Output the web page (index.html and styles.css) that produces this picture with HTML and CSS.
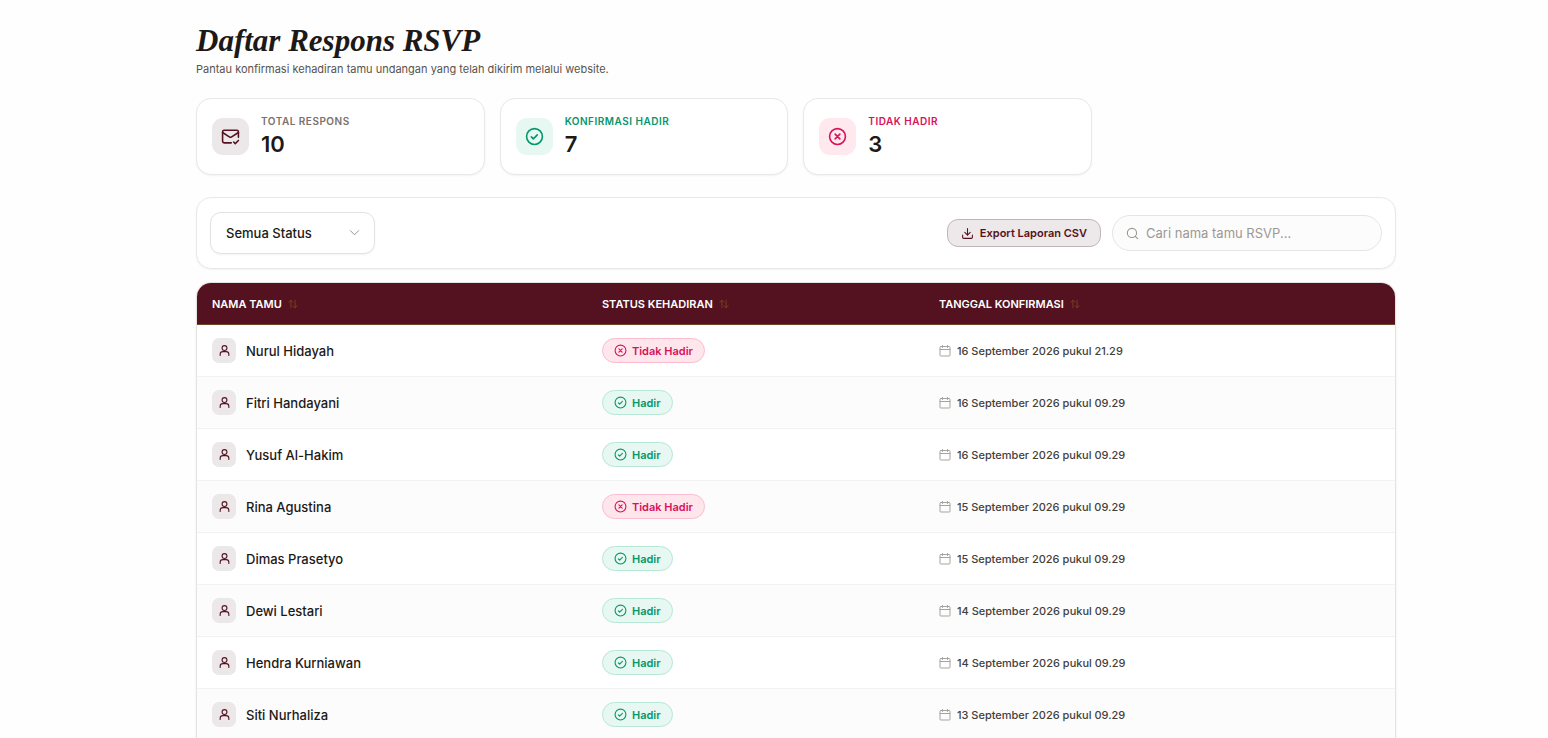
FILE: index.html
```html
<!DOCTYPE html>
<html lang="id">
<head>
<meta charset="utf-8">
<title>Daftar Respons RSVP</title>
<link rel="stylesheet" href="styles.css">
</head>
<body>
<svg class="sprite" aria-hidden="true">
  <symbol id="mail-check" viewBox="0 0 24 24"><path d="M22 13V6a2 2 0 0 0-2-2H4a2 2 0 0 0-2 2v12c0 1.100.9 2 2 2h9"/><path d="m22 7-8.970 5.700a1.940 1.940 0 0 1-2.060 0L2 7"/><path d="m16 19 2 2 4-4"/></symbol>
  <symbol id="check" viewBox="0 0 24 24"><circle cx="12" cy="12" r="10"/><path d="m8 12.500 2.500 2.500 5-5"/></symbol>
  <symbol id="cross" viewBox="0 0 24 24"><circle cx="12" cy="12" r="10"/><path d="m15 9-6 6M9 9l6 6"/></symbol>
  <symbol id="user" viewBox="0 0 24 24"><circle cx="12" cy="7.500" r="4.500"/><path d="M4 21v-2a5 5 0 0 1 5-5h6a5 5 0 0 1 5 5v2"/></symbol>
  <symbol id="calendar" viewBox="0 0 24 24"><rect x="2" y="3" width="20" height="19" rx="1.500"/><path d="M7 1v4M17 1v4M2 9h20"/></symbol>
  <symbol id="sort" viewBox="0 0 24 24"><path d="m2 8 5-5 5 5M7 3v18M12 16l5 5 5-5M17 21V3"/></symbol>
  <symbol id="download" viewBox="0 0 24 24"><path d="M21 15v4a2 2 0 0 1-2 2H5a2 2 0 0 1-2-2v-4M7 10l5 5 5-5M12 15V3"/></symbol>
  <symbol id="search" viewBox="0 0 24 24"><circle cx="11" cy="11" r="8.500"/><path d="m21.500 21.500-4.400-4.400"/></symbol>
  <symbol id="chevron" viewBox="0 0 24 24"><path d="m3 8 9 9 9-9"/></symbol>
</svg>
<main class="page">
  <header class="intro">
    <h1 class="title">Daftar Respons RSVP</h1>
    <p class="subtitle">Pantau konfirmasi kehadiran tamu undangan yang telah dikirim melalui website.</p>
  </header>
  <section class="stats">
    <div class="card stat"><span class="stat-icon"><svg class="icon"><use href="#mail-check"/></svg></span><div><p class="stat-label">TOTAL RESPONS</p><p class="stat-value">10</p></div></div>
    <div class="card stat stat-yes"><span class="stat-icon"><svg class="icon"><use href="#check"/></svg></span><div><p class="stat-label">KONFIRMASI HADIR</p><p class="stat-value">7</p></div></div>
    <div class="card stat stat-no"><span class="stat-icon"><svg class="icon"><use href="#cross"/></svg></span><div><p class="stat-label">TIDAK HADIR</p><p class="stat-value">3</p></div></div>
  </section>
  <section class="card toolbar">
    <div class="select-wrap">
      <select class="select" aria-label="Status"><option>Semua Status</option></select>
      <svg class="icon chevron"><use href="#chevron"/></svg>
    </div>
    <div class="actions">
      <button class="export" type="button"><svg class="icon"><use href="#download"/></svg>Export Laporan CSV</button>
      <label class="search"><svg class="icon"><use href="#search"/></svg><input class="search-input" type="text" placeholder="Cari nama tamu RSVP..." aria-label="Cari nama tamu"></label>
    </div>
  </section>
  <div class="table-wrap">
    <table class="table">
      <colgroup><col class="col-name"><col class="col-status"><col></colgroup>
      <thead><tr>
        <th><span class="head">NAMA TAMU<svg class="icon"><use href="#sort"/></svg></span></th>
        <th><span class="head">STATUS KEHADIRAN<svg class="icon"><use href="#sort"/></svg></span></th>
        <th><span class="head">TANGGAL KONFIRMASI<svg class="icon"><use href="#sort"/></svg></span></th>
      </tr></thead>
      <tbody>
        <tr><td><div class="guest"><span class="avatar"><svg class="icon"><use href="#user"/></svg></span>Nurul Hidayah</div></td><td><span class="badge badge-no"><svg class="icon"><use href="#cross"/></svg>Tidak Hadir</span></td><td><div class="date"><svg class="icon"><use href="#calendar"/></svg>16 September 2026 pukul 21.29</div></td></tr>
        <tr><td><div class="guest"><span class="avatar"><svg class="icon"><use href="#user"/></svg></span>Fitri Handayani</div></td><td><span class="badge"><svg class="icon"><use href="#check"/></svg>Hadir</span></td><td><div class="date"><svg class="icon"><use href="#calendar"/></svg>16 September 2026 pukul 09.29</div></td></tr>
        <tr><td><div class="guest"><span class="avatar"><svg class="icon"><use href="#user"/></svg></span>Yusuf Al-Hakim</div></td><td><span class="badge"><svg class="icon"><use href="#check"/></svg>Hadir</span></td><td><div class="date"><svg class="icon"><use href="#calendar"/></svg>16 September 2026 pukul 09.29</div></td></tr>
        <tr><td><div class="guest"><span class="avatar"><svg class="icon"><use href="#user"/></svg></span>Rina Agustina</div></td><td><span class="badge badge-no"><svg class="icon"><use href="#cross"/></svg>Tidak Hadir</span></td><td><div class="date"><svg class="icon"><use href="#calendar"/></svg>15 September 2026 pukul 09.29</div></td></tr>
        <tr><td><div class="guest"><span class="avatar"><svg class="icon"><use href="#user"/></svg></span>Dimas Prasetyo</div></td><td><span class="badge"><svg class="icon"><use href="#check"/></svg>Hadir</span></td><td><div class="date"><svg class="icon"><use href="#calendar"/></svg>15 September 2026 pukul 09.29</div></td></tr>
        <tr><td><div class="guest"><span class="avatar"><svg class="icon"><use href="#user"/></svg></span>Dewi Lestari</div></td><td><span class="badge"><svg class="icon"><use href="#check"/></svg>Hadir</span></td><td><div class="date"><svg class="icon"><use href="#calendar"/></svg>14 September 2026 pukul 09.29</div></td></tr>
        <tr><td><div class="guest"><span class="avatar"><svg class="icon"><use href="#user"/></svg></span>Hendra Kurniawan</div></td><td><span class="badge"><svg class="icon"><use href="#check"/></svg>Hadir</span></td><td><div class="date"><svg class="icon"><use href="#calendar"/></svg>14 September 2026 pukul 09.29</div></td></tr>
        <tr><td><div class="guest"><span class="avatar"><svg class="icon"><use href="#user"/></svg></span>Siti Nurhaliza</div></td><td><span class="badge"><svg class="icon"><use href="#check"/></svg>Hadir</span></td><td><div class="date"><svg class="icon"><use href="#calendar"/></svg>13 September 2026 pukul 09.29</div></td></tr>
      </tbody>
    </table>
  </div>
</main>
</body>
</html>
```
FILE: styles.css
```css
* { box-sizing: border-box; }
body {
  margin: 0;
  padding: 24px 0 0 44px;
  background: #fefefe;
  color: #1c1917;
  font-family: Inter, "Open Sans", sans-serif;
  font-size: 13px;
}
h1, p { margin: 0; }
button, input, select { font: inherit; color: inherit; }
.sprite { position: absolute; width: 0; height: 0; }
.icon {
  flex: none;
  width: 13px;
  height: 13px;
  fill: none;
  stroke: currentColor;
  stroke-width: 2;
  stroke-linecap: round;
  stroke-linejoin: round;
}
.page { max-width: 1200px; margin: 0 auto; }
.title {
  font-family: "Liberation Serif", serif;
  font-size: 31px;
  line-height: 34px;
  font-weight: 700;
  font-style: italic;
}
.subtitle { margin-top: 2px; font-size: 11px; line-height: 18px; color: #57534e; }
.card {
  background: #fff;
  border: 1px solid #e9e8e8;
  border-radius: 15px;
  box-shadow: 0 1px 2px rgba(0, 0, 0, 0.05);
}
.stats {
  display: grid;
  grid-template-columns: repeat(3, 1fr);
  gap: 15px;
  max-width: 896px;
  margin-top: 20px;
}
.stat { display: flex; align-items: center; gap: 12px; min-height: 77px; padding: 14px 15px; }
.stat-icon {
  display: grid;
  place-items: center;
  width: 37px;
  height: 37px;
  border-radius: 11px;
  background: #ece8e9;
  color: #541220;
}
.stat-icon .icon { width: 19px; height: 19px; }
.stat-label { font-size: 10px; line-height: 15px; font-weight: 600; letter-spacing: 0.5px; color: #78716c; }
.stat-value { font-size: 22px; line-height: 30px; font-weight: 600; }
.stat-yes .stat-icon { background: #e6f8f1; }
.stat-yes .stat-icon, .stat-yes .stat-label { color: #059669; }
.stat-no .stat-icon { background: #ffe8ee; }
.stat-no .stat-icon, .stat-no .stat-label { color: #d81159; }
.toolbar {
  display: flex;
  align-items: center;
  justify-content: space-between;
  margin-top: 22px;
  padding: 14px 13px;
}
.select-wrap { position: relative; }
.select {
  display: block;
  appearance: none;
  width: 165px;
  height: 42px;
  padding: 0 15px;
  border: 1px solid #e4e3e3;
  border-radius: 11px;
  background: #fff;
  font-weight: 500;
  box-shadow: 0 1px 2px rgba(0, 0, 0, 0.05);
}
.chevron { position: absolute; right: 15px; top: 15px; width: 11px; height: 11px; color: #8b8884; pointer-events: none; }
.actions { display: flex; align-items: center; gap: 11px; }
.export {
  display: flex;
  align-items: center;
  gap: 6px;
  height: 28px;
  padding: 0 13px;
  border: 1px solid #c3b4b8;
  border-radius: 11px;
  background: #ede8e9;
  color: #541220;
  font-size: 11px;
  font-weight: 600;
}
.search {
  display: flex;
  align-items: center;
  gap: 7px;
  width: 270px;
  height: 36px;
  padding: 0 13px;
  border: 1px solid #e6e5e5;
  border-radius: 18px;
  background: #fcfcfc;
  color: #99958f;
}
.search-input { flex: 1; min-width: 0; padding: 0; border: 0; outline: 0; background: transparent; color: #1c1917; }
.search-input::placeholder { color: #9c9894; opacity: 1; }
.table-wrap {
  margin-top: 13px;
  overflow: hidden;
  border: 1px solid #e4e3e3;
  border-bottom: 0;
  border-radius: 15px 15px 0 0;
  background: #fff;
  box-shadow: 0 1px 2px rgba(0, 0, 0, 0.08);
}
.table { width: 100%; border-collapse: separate; border-spacing: 0; table-layout: fixed; }
.col-name { width: 32.550%; }
.col-status { width: 28.130%; }
th { height: 42px; padding: 0 15px; background: #541220; border-bottom: 1px solid #6f4524; color: #fff; font-size: 11px; font-weight: 600; text-align: left; }
.head { display: flex; align-items: center; gap: 6px; }
.head .icon { width: 10px; height: 10px; color: #864322; }
td { height: 52px; padding: 0 15px; border-bottom: 1px solid #f3f2f2; }
tbody tr:nth-child(even) { background: #fcfcfc; }
.guest { display: flex; align-items: center; gap: 10px; font-weight: 500; }
.avatar { display: grid; place-items: center; width: 24px; height: 25px; border-radius: 7px; background: #ece8e9; color: #541220; }
.badge {
  display: inline-flex;
  align-items: center;
  gap: 5px;
  height: 25px;
  padding: 0 11px;
  border: 1px solid #b7e8d5;
  border-radius: 13px;
  background: #e6f8f1;
  color: #059669;
  font-size: 11px;
  font-weight: 600;
  vertical-align: middle;
}
.badge-no { border-color: #fbbdcf; background: #ffe6ec; color: #d81159; }
.date { display: flex; align-items: center; gap: 6px; color: #44403c; font-size: 11px; font-weight: 500; }
.date .icon { width: 12px; height: 12px; color: #a8a29e; }
```
